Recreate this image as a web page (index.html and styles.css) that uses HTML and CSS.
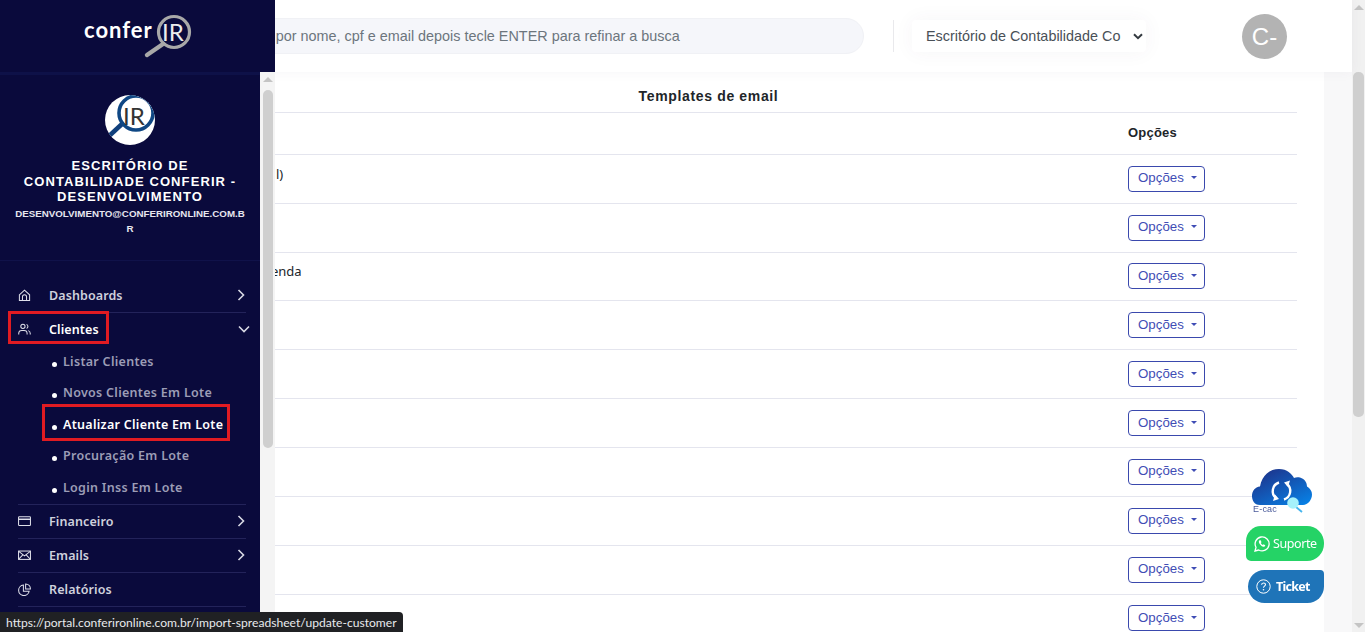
FILE: index.html
```html
<!DOCTYPE html>
<html lang="pt-BR">
<head>
<meta charset="utf-8">
<title>Templates de email</title>
<link rel="stylesheet" href="styles.css">
</head>
<body>
<div class="page">
  <header class="topbar">
    <div class="search">Pesquise por nome, cpf e email depois tecle ENTER para refinar a busca</div>
    <div class="divider"></div>
    <div class="select"><span>Escritório de Contabilidade Co</span>
      <svg class="select-chev" width="10" height="7" viewBox="0 0 10 7"><path d="M1 1.2l4 4 4-4" fill="none" stroke="#343a40" stroke-width="2"/></svg>
    </div>
    <div class="avatar">C-</div>
  </header>
  <div class="content">
    <main class="panel">
      <h1 class="title">Templates de email</h1>
      <div class="row row-head"><div class="name"></div><div class="opts">Opções</div></div>
      <div class="row"><div class="name name-a">l)</div><div class="opts"><button class="btn">Opções<i class="caret"></i></button></div></div>
      <div class="row"><div class="name"></div><div class="opts"><button class="btn">Opções<i class="caret"></i></button></div></div>
      <div class="row"><div class="name name-b">enda</div><div class="opts"><button class="btn">Opções<i class="caret"></i></button></div></div>
      <div class="row"><div class="name"></div><div class="opts"><button class="btn">Opções<i class="caret"></i></button></div></div>
      <div class="row"><div class="name"></div><div class="opts"><button class="btn">Opções<i class="caret"></i></button></div></div>
      <div class="row"><div class="name"></div><div class="opts"><button class="btn">Opções<i class="caret"></i></button></div></div>
      <div class="row"><div class="name"></div><div class="opts"><button class="btn">Opções<i class="caret"></i></button></div></div>
      <div class="row"><div class="name"></div><div class="opts"><button class="btn">Opções<i class="caret"></i></button></div></div>
      <div class="row"><div class="name"></div><div class="opts"><button class="btn">Opções<i class="caret"></i></button></div></div>
      <div class="row"><div class="name"></div><div class="opts"><button class="btn">Opções<i class="caret"></i></button></div></div>
    </main>
    <div class="gutter"></div>
  </div>
</div>

<div class="page-scroll">
  <i class="arrow-up"></i>
  <div class="thumb-space"><div class="thumb thumb-page"></div></div>
  <i class="arrow-down"></i>
</div>

<aside class="sidebar">
  <div class="side-head">
    <svg class="logo" width="120" height="52" viewBox="0 0 120 52">
      <text x="0" y="28" class="logo-word">confer</text>
      <circle cx="90" cy="22" r="15.5" fill="none" stroke="#a8a8a8" stroke-width="3.2"/>
      <path d="M79 34L63 45" stroke="#a8a8a8" stroke-width="4.4" stroke-linecap="round"/>
      <text x="78" y="31" class="logo-ir">IR</text>
    </svg>
  </div>
  <div class="side-body">
    <nav class="side-scroll">
      <div class="profile">
        <svg class="profile-logo" width="50" height="50" viewBox="0 0 50 50">
          <defs><clipPath id="disc"><circle cx="25" cy="25" r="25"/></clipPath></defs>
          <circle cx="25" cy="25" r="25" fill="#fff"/>
          <g clip-path="url(#disc)">
            <path d="M17 29L3 42" stroke="#103f7c" stroke-width="4.5"/>
            <circle cx="31" cy="18" r="17" fill="#fff" stroke="#0f4784" stroke-width="3.6"/>
            <text x="18" y="30" class="profile-ir">IR</text>
          </g>
        </svg>
        <div class="profile-name">ESCRITÓRIO DE CONTABILIDADE CONFERIR - DESENVOLVIMENTO</div>
        <div class="profile-mail">DESENVOLVIMENTO@CONFERIRONLINE.COM.BR</div>
      </div>
      <ul class="menu">
        <li class="item">
          <svg class="ico" viewBox="0 0 14 14"><path d="M1.500 6.200L7 1.200l5.500 5v6.300h-11zM4.800 12.500V8.300a2.200 2.200 0 0 1 4.400 0v4.200" /></svg>
          <span>Dashboards</span>
          <svg class="chev" viewBox="0 0 8 12"><path d="M1.500 1l5 5-5 5"/></svg>
        </li>
        <li class="item item-open">
          <svg class="ico" viewBox="0 0 14 14"><circle cx="5.300" cy="3.600" r="2.300"/><path d="M.8 12.500v-1.300c0-2 1.600-3.200 3.400-3.200h2.300c1.800 0 3.300 1.200 3.300 3.200v1.300M9.200 1.500a2.300 2.300 0 0 1 0 4.300M11 8.200c1.300.4 2.200 1.500 2.200 3v1.300"/></svg>
          <span class="here">Clientes</span>
          <svg class="chev chev-down" viewBox="0 0 12 8"><path d="M1 1.500l5 5 5-5"/></svg>
        </li>
        <li class="sub">Listar Clientes</li>
        <li class="sub">Novos Clientes Em Lote</li>
        <li class="sub sub-on">Atualizar Cliente Em Lote</li>
        <li class="sub">Procuração Em Lote</li>
        <li class="sub sub-last">Login Inss Em Lote</li>
        <li class="item">
          <svg class="ico" viewBox="0 0 14 14"><rect x=".6" y="1.800" width="12.800" height="9.600" rx=".8"/><path d="M.6 4.600h12.800" stroke-width="1.600"/></svg>
          <span>Financeiro</span>
          <svg class="chev" viewBox="0 0 8 12"><path d="M1.500 1l5 5-5 5"/></svg>
        </li>
        <li class="item">
          <svg class="ico" viewBox="0 0 14 14"><rect x=".6" y="2.200" width="12.800" height="9" /><path d="M.8 2.600L7 7.500l6.200-4.900M.8 10.900l4.400-4.600M13.200 10.900L8.800 6.300"/></svg>
          <span>Emails</span>
          <svg class="chev" viewBox="0 0 8 12"><path d="M1.500 1l5 5-5 5"/></svg>
        </li>
        <li class="item item-plain">
          <svg class="ico" viewBox="0 0 14 14"><path d="M5.800 2.200a5.700 5.700 0 1 0 6.200 6.600H5.800zM8.200 1v5.400h5.200A5.400 5.400 0 0 0 8.200 1z"/></svg>
          <span>Relatórios</span>
        </li>
      </ul>
    </nav>
    <div class="side-track">
      <i class="arrow-up"></i>
      <div class="thumb-space"><div class="thumb thumb-side"></div></div>
    </div>
  </div>
</aside>

<div class="float-tools">
  <div class="ecac">
    <svg width="60" height="46" viewBox="0 0 60 46">
      <defs><linearGradient id="cloud" x1="0.1" y1="0" x2="0.9" y2="1"><stop offset="0" stop-color="#1f2f86"/><stop offset="1" stop-color="#0781e6"/></linearGradient></defs>
      <path d="M8 37C2 37 0 32 0 28c0-5 3-9 8-9.500C10 7 18 1 27 1c8 0 13 5 15 9 2-1 4-1 6-.5 5 1.500 7 5.500 7 9 3 2 5 4.500 5 8 0 5-4 10.500-9 10.500z" fill="url(#cloud)"/>
      <path d="M27 14.500A9 9 0 0 0 24 30M32 31.500A9 9 0 0 0 35 16" fill="none" stroke="#fff" stroke-width="2.400"/>
      <path d="M21 33l6-2-4-4.500zM38 12.500l-6 2 4 4.500z" fill="#fff"/>
      <path d="M44 39l6 5" stroke="#45b5ee" stroke-width="1.800"/>
      <circle cx="41" cy="35" r="5.800" fill="#a5f1fb"/>
    </svg>
    <span class="ecac-label">E-cac</span>
  </div>
  <div class="fab fab-wa">
    <svg width="16" height="16" viewBox="0 0 16 16"><path d="M1 15l1-3.700A7 7 0 1 1 4.700 14z" fill="none" stroke="#fff" stroke-width="1.300"/><path d="M5.500 4.300c-.9.700-1 2 .2 3.800 1.300 1.900 2.900 3 4.300 2.600.8-.2 1.300-.9 1.200-1.500L9.600 8.300l-.8.800C7.900 8.700 7.200 8 6.800 7l.7-.8-.8-1.900z" fill="#fff"/></svg>
    <span>Suporte</span>
  </div>
  <div class="fab fab-ticket">
    <svg width="15" height="15" viewBox="0 0 15 15"><circle cx="7.500" cy="7.500" r="6.700" fill="none" stroke="#fff" stroke-width="1"/><path d="M5.600 5.800c0-2.400 3.900-2.400 3.900-.2 0 1.500-2 1.500-2 3.100" fill="none" stroke="#fff" stroke-width="1.100"/><circle cx="7.500" cy="10.800" r=".8" fill="#fff"/></svg>
    <span>Ticket</span>
  </div>
</div>

<div class="status">https://portal.conferironline.com.br/import-spreadsheet/update-customer</div>
</body>
</html>
```

FILE: styles.css
```css
*, *::before, *::after { box-sizing: border-box; }
html, body { height: 100%; }
body {
  margin: 0;
  display: flex;
  overflow: hidden;
  font-family: "Liberation Sans", Arial, sans-serif;
  background: #fff;
  color: #212529;
}

/* main page */
.page { flex: 1; min-width: 0; display: flex; flex-direction: column; }
.topbar {
  height: 72px;
  flex: none;
  display: flex;
  align-items: center;
  padding-left: 196px;
  background: #fff;
  box-shadow: 0 0 12px rgba(82, 63, 105, .05);
  position: relative;
}
.search {
  width: 668px;
  height: 36px;
  line-height: 34px;
  padding-left: 15.5px;
  font-size: 14.4px;
  color: #6c757d;
  background: #f5f6fa;
  border: 1px solid #f0f1f5;
  border-radius: 18px;
  white-space: nowrap;
}
.divider { width: 1px; height: 32px; background: #e9e9ec; margin-left: 29px; }
.select {
  width: 234px;
  height: 32px;
  margin-left: 18px;
  padding-left: 14px;
  display: flex;
  align-items: center;
  font-size: 14.4px;
  color: #495057;
  background: #fff;
  box-shadow: 0 0 20px rgba(82, 63, 105, .05);
  border-radius: 4px;
}
.select-chev { margin-left: 13px; }
.avatar {
  width: 45px;
  height: 45px;
  margin-left: 96px;
  border-radius: 50%;
  background: #b3b3b3;
  color: #fff;
  font-size: 24px;
  line-height: 45px;
  text-align: center;
}
.content { flex: 1; display: flex; min-height: 0; overflow: hidden; }
.panel { width: 1324px; flex: none; padding: 0 27px 0 120px; background: #fff; }
.gutter { flex: 1; background: #f8f8f9; }
.title {
  margin: 0;
  height: 40px;
  padding-top: 16px;
  line-height: 17px;
  text-align: center;
  font-size: 14px;
  font-weight: 700;
  letter-spacing: .65px;
  color: #212529;
}
.row {
  display: flex;
  align-items: center;
  height: 48.87px;
  border-top: 1px solid #e4e5ee;
}
.row-head { height: 41.8px; padding-bottom: 2px; font-size: 13px; font-weight: 700; letter-spacing: .2px; }
.name {
  flex: 1;
  padding-bottom: 10px;
  font: 400 13px "Noto Sans", sans-serif;
  color: #212529;
}
.name-a { padding-left: 156px; }
.name-b { padding-left: 151px; }
.opts { width: 169px; flex: none; }
.btn {
  display: flex;
  align-items: center;
  width: 77px;
  height: 26px;
  padding: 0 0 2px 9px;
  background: #fff;
  border: 1px solid #3a49ad;
  border-radius: 4px;
  font: 400 13.3px "Liberation Sans", Arial, sans-serif;
  color: #3f4db5;
}
.caret {
  margin-left: 7px;
  border-top: 3px solid #3f4db5;
  border-left: 3px solid transparent;
  border-right: 3px solid transparent;
}

/* scrollbars */
.page-scroll {
  width: 13px;
  flex: none;
  display: flex;
  flex-direction: column;
  align-items: center;
  background: #f1f1f1;
}
.arrow-up, .arrow-down { flex: none; display: block; border-left: 5px solid transparent; border-right: 5px solid transparent; }
.arrow-up { margin-top: 5px; border-bottom: 5px solid #c4c4c4; }
.arrow-down { margin-bottom: 4px; border-top: 5px solid #c4c4c4; }
.thumb-space { flex: 1; width: 100%; display: flex; flex-direction: column; align-items: center; }
.thumb { border-radius: 5px; background: #cfcfcf; }
.thumb-page { width: 11px; height: 345px; margin-top: 62px; }

/* sidebar */
.sidebar {
  position: fixed;
  left: 0;
  top: 0;
  bottom: 0;
  width: 275px;
  display: flex;
  flex-direction: column;
  z-index: 5;
}
.side-head { height: 72px; flex: none; background: #0a0a3c; padding: 10px 0 0 84px; }
.logo { display: block; }
.logo-word { font: 700 22px "Lato", sans-serif; letter-spacing: 1px; fill: #fff; }
.logo-ir { font: 400 24px "Lato", sans-serif; fill: #ececec; }
.side-body { flex: 1; min-height: 0; display: flex; }
.side-scroll {
  width: 260px;
  flex: none;
  background: #0a0a3c;
  border-top: 3px solid #0e1148;
  overflow: hidden;
}
.side-track { flex: 1; display: flex; flex-direction: column; align-items: center; background: #f4f4f4; }
.thumb-side { width: 10px; height: 358px; margin-top: 8px; }
.profile {
  height: 186px;
  padding-top: 20px;
  border-bottom: 1px solid #10124a;
  text-align: center;
  color: #fff;
  font-weight: 700;
}
.profile-logo { display: block; margin: 0 auto; }
.profile-ir { font: 400 24px "Lato", sans-serif; fill: #333; }
.profile-name {
  margin: 13px auto 0;
  width: 232px;
  font-size: 13px;
  line-height: 15.6px;
  letter-spacing: 1.1px;
}
.profile-mail {
  margin: 1px auto 0;
  width: 236px;
  font-size: 9.75px;
  line-height: 15.5px;
  word-break: break-all;
  color: #e6e6ef;
}
.menu {
  list-style: none;
  margin: 0;
  padding: 17.7px 14px 0 18px;
  font-family: "Noto Sans", sans-serif;
}
.item {
  display: flex;
  align-items: center;
  height: 34px;
  border-bottom: 1px solid #23235a;
  font-size: 12.5px;
  font-weight: 600;
  color: #cfd1dd;
}
.item > span { margin-left: 18px; flex: 1; letter-spacing: .1px; }
.ico {
  width: 13px;
  height: 13px;
  flex: none;
  fill: none;
  stroke: #dfe0ea;
  stroke-width: 1.1;
}
.chev {
  height: 12px;
  width: 12px;
  flex: none;
  fill: none;
  stroke: #d8d9e4;
  stroke-width: 1.6;
  margin-right: -1px;
}
.chev-down { margin-right: -4px; }
.item-open { height: 33px; border-bottom: 0; color: #fff; }
.here { position: relative; }
.here::before {
  content: "";
  position: absolute;
  left: -41px;
  top: -10px;
  width: 101px;
  height: 33px;
  border: 3px solid #e01b22;
}
.sub {
  position: relative;
  height: 31.5px;
  padding-left: 45px;
  font-size: 12.5px;
  font-weight: 600;
  line-height: 31.5px;
  letter-spacing: .29px;
  color: #9c9db6;
}
.sub::before {
  content: "";
  position: absolute;
  left: 34px;
  top: 16px;
  width: 5px;
  height: 5px;
  border-radius: 50%;
  background: #fff;
}
.sub-on { color: #fff; }
.sub-on::after {
  content: "";
  position: absolute;
  left: 24px;
  top: -5px;
  width: 188px;
  height: 37px;
  border: 3px solid #e01b22;
}
.sub-last { border-bottom: 1px solid #23235a; height: 33px; }

/* floating tools */
.float-tools {
  position: fixed;
  right: 41px;
  bottom: 29px;
  z-index: 4;
  display: flex;
  flex-direction: column;
  align-items: flex-end;
}
.ecac { position: relative; width: 60px; height: 46px; margin: 0 12px 12px 0; }
.ecac svg { display: block; }
.ecac-label {
  position: absolute;
  left: 1px;
  top: 36px;
  font-size: 9px;
  letter-spacing: .2px;
  color: #4a5a9a;
}
.fab { display: flex; align-items: center; color: #fff; font-size: 13px; }
.fab-wa {
  width: 78px;
  height: 35px;
  padding-left: 8px;
  gap: 3px;
  background: #25d366;
  border-radius: 15px 17px 17px 5px;
  font-family: "Noto Sans", sans-serif;
  font-size: 12.5px;
  letter-spacing: -.4px;
}
.fab-ticket {
  width: 76px;
  height: 33px;
  margin-top: 9px;
  padding-left: 8px;
  gap: 5px;
  background: #1f74b8;
  border-radius: 17px 4px 17px 17px;
  font-family: "Noto Sans", sans-serif;
  font-weight: 700;
  font-size: 12.5px;
  letter-spacing: -.7px;
}

/* browser status bubble */
.status {
  position: fixed;
  left: 0;
  bottom: 0;
  z-index: 6;
  height: 20px;
  padding: 0 6px;
  font: 12.12px/21px "Lato", sans-serif;
  color: #e8eaed;
  background: #202124;
  border-top-right-radius: 4px;
  white-space: nowrap;
}
```
